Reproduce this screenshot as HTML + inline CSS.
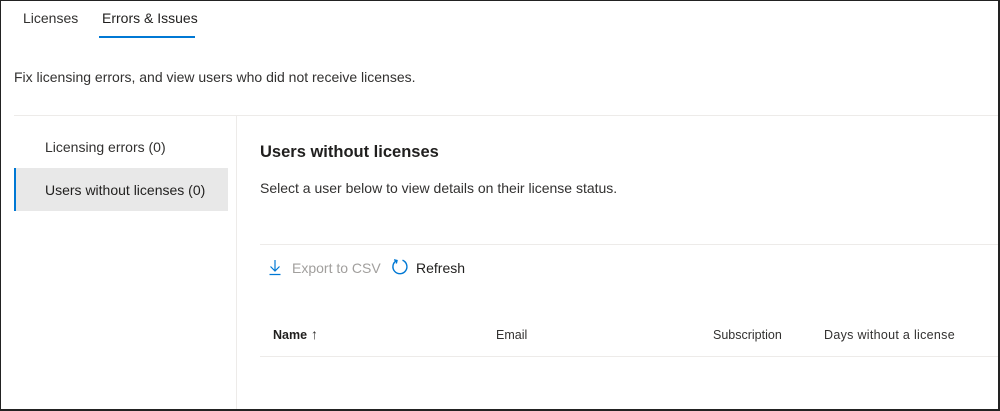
<!DOCTYPE html>
<html><head><style>
body{margin:0;width:1000px;height:411px;overflow:hidden;background:#fff;font-family:"Liberation Sans",sans-serif;color:#323130;}
.frame{position:absolute;left:0;top:0;width:997px;height:408px;border:1px solid #222;border-right-width:2px;border-bottom-width:2px;}
.t{position:absolute;white-space:nowrap;}
.hl{position:absolute;height:1px;background:#edebe9;}
</style></head><body>
<div class="frame"></div>
<div class="t" style="left:23px;top:10px;font-size:14px;">Licenses</div>
<div class="t" style="left:102px;top:10px;font-size:14px;color:#201f1e;">Errors &amp; Issues</div>
<div style="position:absolute;left:99px;top:36px;width:96px;height:2px;background:#0078d4;"></div>
<div class="t" style="left:14px;top:69px;font-size:14px;">Fix licensing errors, and view users who did not receive licenses.</div>
<div class="hl" style="left:14px;top:115px;width:984px;"></div>
<div style="position:absolute;left:236px;top:116px;width:1px;height:293px;background:#edebe9;"></div>
<div class="t" style="left:45px;top:139px;font-size:14px;">Licensing errors (0)</div>
<div style="position:absolute;left:14px;top:168px;width:214px;height:43px;background:#e8e8e8;"></div>
<div style="position:absolute;left:14px;top:168px;width:2px;height:43px;background:#0078d4;"></div>
<div class="t" style="left:45px;top:182px;font-size:14px;color:#201f1e;">Users without licenses (0)</div>
<div class="t" style="left:260px;top:143px;font-size:16.5px;font-weight:bold;color:#201f1e;">Users without licenses</div>
<div class="t" style="left:260px;top:180px;font-size:14px;">Select a user below to view details on their license status.</div>
<div class="hl" style="left:260px;top:244px;width:738px;"></div>
<svg style="position:absolute;left:268px;top:259px" width="14" height="17" viewBox="0 0 14 17"><path d="M7 1V12M2.5 7.5L7 12L11.5 7.5M1.5 15.5H12.5" stroke="#0078d4" stroke-width="1.2" fill="none"/></svg>
<div class="t" style="left:292px;top:260px;font-size:14px;color:#a19f9d;">Export to CSV</div>
<svg style="position:absolute;left:391px;top:258px" width="18" height="18" viewBox="0 0 18 18"><path d="M11.5 2.2A7 7 0 1 1 5.5 2.6" stroke="#0078d4" stroke-width="1.4" fill="none"/><path d="M3 1.8L6 2.5L5.3 5.5" stroke="#0078d4" stroke-width="1.4" fill="none"/></svg>
<div class="t" style="left:416px;top:260px;font-size:14px;color:#201f1e;">Refresh</div>
<div class="t" style="left:273px;top:328px;font-size:12.5px;font-weight:bold;color:#201f1e;">Name</div>
<div class="t" style="left:311px;top:326px;font-size:14px;">↑</div>
<div class="t" style="left:496px;top:328px;font-size:12.5px;">Email</div>
<div class="t" style="left:713px;top:328px;font-size:12.5px;">Subscription</div>
<div class="t" style="left:824px;top:328px;font-size:12.5px;letter-spacing:0.3px;">Days without a license</div>
<div class="hl" style="left:260px;top:356px;width:738px;"></div>
</body></html>
